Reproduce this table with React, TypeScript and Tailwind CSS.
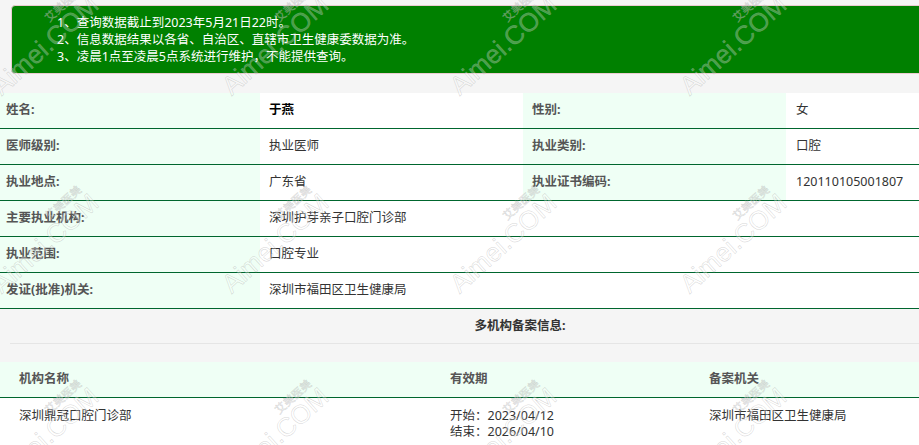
const NOTICES = [
  '1、查询数据截止到2023年5月21日22时。',
  '2、信息数据结果以各省、自治区、直辖市卫生健康委数据为准。',
  '3、凌晨1点至凌晨5点系统进行维护，不能提供查询。',
]

const WIDE_ROWS = [
  { label: '主要执业机构:', value: '深圳护芽亲子口腔门诊部' },
  { label: '执业范围:', value: '口腔专业' },
  { label: '发证(批准)机关:', value: '深圳市福田区卫生健康局' },
]

// watermark anchors: where the baseline of "Aimei.COM" begins
const MARK_X = [5, 235, 463, 693]
const MARK_Y = [100, 298, 492]

function Label({ children }: { children: React.ReactNode }) {
  return <div className="flex items-center bg-[#effff5] font-bold text-[#555]">{children}</div>
}

function Value({ children, className = '' }: { children: React.ReactNode; className?: string }) {
  return <div className={`flex items-center bg-white text-[#333] ${className}`}>{children}</div>
}

export default function App() {
  return (
    <div className="relative w-full overflow-hidden bg-[#f5f5f5] text-[12.5px] font-['Noto_Sans','Noto_Sans_CJK_SC',sans-serif]">
      <div className="w-[1050px] pt-[5px]">
        {/* Notice */}
        <div className="mx-[11px] h-[69px] rounded border border-[#ebccd1] bg-[#008000] pl-[45px] pt-[8px] text-white leading-[17px]">
          {NOTICES.map(n => (
            <div key={n}>{n}</div>
          ))}
        </div>

        {/* Doctor info */}
        <div className="mt-[19px]">
          <div className="grid h-[36px] grid-cols-[260px_263px_263px_1fr] border-b border-[#00662e]">
            <Label><span className="pl-[6px]">姓名:</span></Label>
            <Value className="pl-[9px] font-bold text-black">于燕</Value>
            <Label><span className="pl-[9px]">性别:</span></Label>
            <Value className="pl-[10px]">女</Value>
          </div>
          <div className="grid h-[36px] grid-cols-[260px_263px_263px_1fr] border-b border-[#00662e]">
            <Label><span className="pl-[6px]">医师级别:</span></Label>
            <Value className="pl-[9px]">执业医师</Value>
            <Label><span className="pl-[9px]">执业类别:</span></Label>
            <Value className="pl-[10px]">口腔</Value>
          </div>
          <div className="grid h-[36px] grid-cols-[260px_263px_263px_1fr] border-b border-[#00662e]">
            <Label><span className="pl-[6px]">执业地点:</span></Label>
            <Value className="pl-[9px]">广东省</Value>
            <Label><span className="pl-[9px]">执业证书编码:</span></Label>
            <Value className="pl-[10px]">120110105001807</Value>
          </div>
          {WIDE_ROWS.map(r => (
            <div key={r.label} className="grid h-[36px] grid-cols-[260px_1fr] border-b border-[#00662e]">
              <Label><span className="pl-[6px]">{r.label}</span></Label>
              <Value className="pl-[9px]">{r.value}</Value>
            </div>
          ))}
        </div>

        {/* Multi-institution records */}
        <div className="flex h-[34px] items-center justify-center pr-[10px] font-bold text-[#333]">多机构备案信息:</div>
        <div className="mx-[10px] border-t border-[#e5e5e5]" />
        <div className="mt-[18px] grid h-[36px] grid-cols-[431px_259px_1fr] items-center border-b border-[#00662e] bg-[#effff5] font-bold text-[#555]">
          <div className="pl-[19px]">机构名称</div>
          <div className="pl-[19px]">有效期</div>
          <div className="pl-[19px]">备案机关</div>
        </div>
        <div className="grid grid-cols-[431px_259px_1fr] bg-white pt-[10px] pb-[8px] leading-[16px] text-[#333]">
          <div className="pl-[19px]">深圳鼎冠口腔门诊部</div>
          <div className="pl-[19px]">
            <div>开始：2023/04/12</div>
            <div>结束：2026/04/10</div>
          </div>
          <div className="pl-[19px]">深圳市福田区卫生健康局</div>
        </div>
      </div>

      {/* Watermarks */}
      {MARK_Y.map(y =>
        MARK_X.map(x => (
          <div
            key={`${x}-${y}`}
            className="pointer-events-none absolute flex h-[38px] origin-bottom-left -rotate-[42deg] flex-col items-end leading-none text-white/30 [-webkit-text-stroke:0.5px_rgba(160,160,160,0.45)]"
            style={{ left: x, top: y - 38 }}
          >
            <span className="pr-[4px] text-[11px]">艾美医美</span>
            <span className="text-[26px] font-['Liberation_Sans',sans-serif]">Aimei.COM</span>
          </div>
        ))
      )}
    </div>
  )
}
